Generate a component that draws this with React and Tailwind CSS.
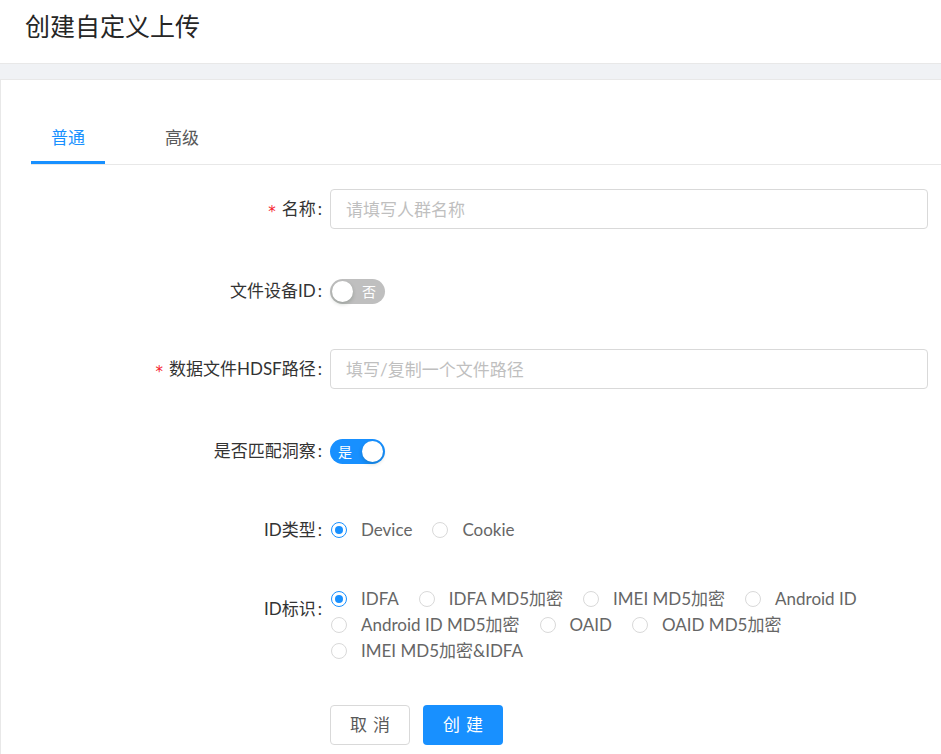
const FONT = "font-['Lato','Noto_Sans_CJK_SC',sans-serif]";

const Label = ({ required, children, className = "" }) => (
	<div
		className={`w-[329px] shrink-0 pr-[8px] text-right text-[17px] leading-10 text-[#333] ${className}`}>
		{required && (
			<span className="relative top-[2px] mr-[6px] font-['DejaVu_Sans',sans-serif] text-[15px] leading-none text-[#f5222d]">
				*
			</span>
		)}
		{children}
		<span className="ml-[2px]">:</span>
	</div>
);

const Radio = ({ checked, label }) => (
	<label className="mr-[19px] flex cursor-pointer items-center">
		<span
			className={`ml-px flex h-4 w-4 items-center justify-center rounded-full border bg-white ${
				checked ? "border-[#1890ff]" : "border-[#d9d9d9]"
			}`}>
			{checked && <span className="h-2 w-2 rounded-full bg-[#1890ff]" />}
		</span>
		<span className="ml-[14px] whitespace-nowrap text-[17px] text-[#666]">
			{label}
		</span>
	</label>
);

const Switch = ({ on, text }) => (
	<button
		className={`relative h-[25px] w-[55px] rounded-full ${
			on ? "bg-[#1890ff]" : "bg-[#bfbfbf]"
		}`}>
		<span
			className={`absolute top-[2px] h-[21px] w-[21px] rounded-full bg-white shadow-[0_2px_4px_rgba(0,35,11,0.2)] ${
				on ? "right-[2px]" : "left-[2px]"
			}`}
		/>
		<span
			className={`absolute top-0 text-[14px] leading-[25px] text-white ${
				on ? "left-[8px]" : "right-[9px]"
			}`}>
			{text}
		</span>
	</button>
);

const TextInput = ({ placeholder }) => (
	<input
		placeholder={placeholder}
		className="h-10 w-[598px] rounded-[4px] border border-[#d9d9d9] bg-white px-[15px] text-[17px] text-[#333] outline-none placeholder:text-[#bfbfbf]"
	/>
);

export default function App() {
	const idLines = [
		["IDFA", "IDFA MD5加密", "IMEI MD5加密", "Android ID"],
		["Android ID MD5加密", "OAID", "OAID MD5加密"],
		["IMEI MD5加密&IDFA"],
	];

	return (
		<div className={`${FONT} min-h-[754px] bg-white`}>
			<div className="h-[64px] border-b border-[#e8e8e8] pl-[25px] pt-[8px]">
				<h1 className="text-[25px] leading-[36px] text-[#262626]">创建自定义上传</h1>
			</div>
			<div className="bg-[#f0f2f5] pt-[15px]">
				<div className="min-h-[675px] border-l border-t border-[#e8e8e8] bg-white">
					{/* tabs */}
					<div className="ml-[30px] mt-[34px] flex border-b border-[#e8e8e8]">
						<div className="relative px-[20px] pb-[14px] pt-[12px] text-[17px] leading-6 text-[#1890ff]">
							普通
							<span className="absolute bottom-0 left-0 h-[3px] w-full bg-[#1890ff]" />
						</div>
						<div className="ml-[40px] px-[20px] pb-[14px] pt-[12px] text-[17px] leading-6 text-[#595959]">
							高级
						</div>
					</div>

					<div className="pt-[24px]">
						<div className="mb-[42px] flex h-10 items-center">
							<Label required>名称</Label>
							<TextInput placeholder="请填写人群名称" />
						</div>

						<div className="mb-[38px] flex h-10 items-center">
							<Label>文件设备ID</Label>
							<Switch on={false} text="否" />
						</div>

						<div className="mb-[42px] flex h-10 items-center">
							<Label required>数据文件HDSF路径</Label>
							<TextInput placeholder="填写/复制一个文件路径" />
						</div>

						<div className="mb-[39px] flex h-10 items-center">
							<Label>是否匹配洞察</Label>
							<Switch on text="是" />
						</div>

						<div className="mb-[39px] flex h-10 items-center">
							<Label>ID类型</Label>
							<Radio checked label="Device" />
							<Radio label="Cookie" />
						</div>

						<div className="flex items-start">
							<Label>ID标识</Label>
							<div className="-mt-[3px]">
								{idLines.map((line, i) => (
									<div key={i} className="flex h-[26px] items-center">
										{line.map((opt) => (
											<Radio key={opt} checked={opt === "IDFA"} label={opt} />
										))}
									</div>
								))}
							</div>
						</div>

						<div className="ml-[329px] mt-[41px] flex gap-[13px] pb-[20px]">
							<button className="flex h-10 w-[80px] items-center justify-center rounded-[4px] border border-[#d9d9d9] bg-white text-[17px] text-[#595959]">
								<span>取</span>
								<span className="ml-[6px]">消</span>
							</button>
							<button className="flex h-10 w-[80px] items-center justify-center rounded-[4px] bg-[#1890ff] text-[17px] text-white">
								<span>创</span>
								<span className="ml-[6px]">建</span>
							</button>
						</div>
					</div>
				</div>
			</div>
		</div>
	);
}
